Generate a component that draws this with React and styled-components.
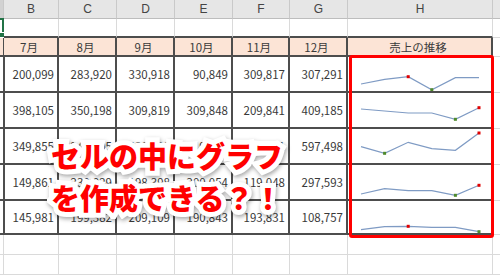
import React from 'react';
import styled, {createGlobalStyle, css} from 'styled-components';

const GlobalStyle = createGlobalStyle`
  html, body {
    margin: 0;
    padding: 0;
    background: #fff;
  }
  body {
    font-family: "Noto Sans CJK JP", "Liberation Sans", sans-serif;
  }
`;

const COLS = [4, 55, 58, 58, 58, 57, 58, 145, 67];
const ROWS = [19, 19, 19, 36, 36, 36, 36, 34, 20, 20];
const LETTERS = ['', 'B', 'C', 'D', 'E', 'F', 'G', 'H', ''];
const MONTHS = ['7月', '8月', '9月', '10月', '11月', '12月'];

const DATA = [
  {
    values: ['200,099', '283,920', '330,918', '90,849', '309,817', '307,291'],
    spark: [27, 22.3, 19.7, 32.7, 20.7, 20.7],
    high: 2,
    low: 3
  },
  {
    values: ['398,105', '350,198', '309,819', '309,848', '209,841', '409,185'],
    spark: [16, 18, 20, 20, 26.3, 14.7],
    high: 5,
    low: 4
  },
  {
    values: ['349,855', '241,095', '436,121', '319,156', '296,301', '597,498'],
    spark: [17.7, 24.3, 13.3, 19.7, 21.3, 4],
    high: 5,
    low: 1
  },
  {
    values: ['149,861', '239,029', '198,398', '200,054', '119,048', '297,593'],
    spark: [29, 23.7, 25.7, 25.7, 30.3, 20.3],
    high: 5,
    low: 4
  },
  {
    values: ['145,981', '199,382', '209,109', '190,843', '193,831', '108,757'],
    spark: [28.7, 25.7, 25.3, 26.3, 26.3, 30.7],
    high: 2,
    low: 5
  }
];

const Sheet = styled.div`
  position: relative;
  width: 500px;
  height: 275px;
  overflow: hidden;
  background: #fff;
`;

const Grid = styled.div`
  display: grid;
  grid-template-columns: ${COLS.map((w) => `${w}px`).join(' ')};
  grid-template-rows: ${ROWS.map((h) => `${h}px`).join(' ')};
`;

const Cell = styled.div`
  position: relative;
  box-sizing: border-box;
  display: flex;
  align-items: center;
  justify-content: ${(p) => (p.$align === 'right' ? 'flex-end' : 'center')};
  padding: 0 3px 0 0;
  border-right: 1px solid #dadada;
  border-bottom: 1px solid #dadada;
  font-size: 11.5px;
  color: #3a3a3a;
  white-space: nowrap;
  ${(p) => p.$bg && css`background: ${p.$bg};`}
  ${(p) => p.$darkRight && css`border-right: 2px solid #4d4d4d;`}
  ${(p) => p.$darkBottom && css`border-bottom: 2px solid #4d4d4d;`}
`;

const ChartCell = styled(Cell)`
  align-items: flex-start;
  justify-content: flex-start;
  padding: 0;
`;

const HeadCell = styled.div`
  box-sizing: border-box;
  display: flex;
  align-items: center;
  justify-content: center;
  background: ${(p) => (p.$active ? '#d2d2d2' : '#e6e6e6')};
  border-right: 1px solid #c9c9c9;
  border-bottom: 1px solid #bdbdbd;
  font-family: "Liberation Sans", sans-serif;
  font-size: 12px;
  color: #444;
`;

const Selection = styled.div`
  position: absolute;
  inset: -1px -1px -1px -1px;
  border: 2px solid #217346;
  border-left: none;
  pointer-events: none;
`;

const Handle = styled.span`
  position: absolute;
  right: -3px;
  bottom: -3px;
  width: 4px;
  height: 4px;
  background: #217346;
  border: 1px solid #fff;
`;

const Frame = styled.div`
  position: absolute;
  left: 349px;
  top: 55px;
  width: 145px;
  height: 183px;
  box-sizing: border-box;
  border: 3px solid #ff0000;
  border-radius: 3px;
  pointer-events: none;
`;

const Caption = styled.div`
  position: absolute;
  left: 51px;
  top: 134px;
  margin: 0;
  font-family: "Noto Sans CJK JP", sans-serif;
  font-weight: 900;
  font-size: 29px;
  line-height: 42px;
  white-space: pre;
  color: #ff0000;
  ${(p) =>
    p.$outline &&
    css`
      color: #fff;
      -webkit-text-stroke: 10px #fff;
      filter: drop-shadow(1px 2px 2px rgba(0, 0, 0, 0.35));
    `}
`;

const SparkSvg = styled.svg`
  display: block;
  flex: none;
`;

function Sparkline({spark, high, low, height}) {
  const xs = spark.map((_, i) => 13 + i * 23.6);
  const points = spark.map((y, i) => `${xs[i]},${y}`).join(' ');
  return (
    <SparkSvg width="143" height={height - 2}>
      <polyline points={points} fill="none" stroke="#7f9bc4" strokeWidth="1.2" />
      <rect x={xs[high] - 1.5} y={spark[high] - 1.5} width="3" height="3" fill="#e00000" />
      <rect x={xs[low] - 1.5} y={spark[low] - 1.5} width="3" height="3" fill="#4f8a2c" />
    </SparkSvg>
  );
}

export default function App() {
  const cells = [];

  // column headers
  LETTERS.forEach((l, c) => {
    cells.push(
      <HeadCell key={`h${c}`} $active={c === 0}>
        {l}
      </HeadCell>
    );
  });

  // row 1 (empty, A1 selected)
  COLS.forEach((_, c) => {
    cells.push(
      <Cell key={`r1-${c}`} $darkBottom={c <= 7}>
        {c === 0 && (
          <Selection>
            <Handle />
          </Selection>
        )}
      </Cell>
    );
  });

  // month header row
  COLS.forEach((_, c) => {
    let text = '';
    if (c >= 1 && c <= 6) text = MONTHS[c - 1];
    if (c === 7) text = '売上の推移';
    const inTable = c <= 7;
    cells.push(
      <Cell key={`r2-${c}`} $bg={inTable ? '#fce4d6' : null} $darkRight={inTable} $darkBottom={inTable}>
        {text}
      </Cell>
    );
  });

  // data rows
  DATA.forEach((row, r) => {
    const height = ROWS[3 + r];
    COLS.forEach((_, c) => {
      const inTable = c <= 7;
      if (c === 7) {
        cells.push(
          <ChartCell key={`d${r}-${c}`} $darkRight $darkBottom>
            <Sparkline spark={row.spark} high={row.high} low={row.low} height={height} />
          </ChartCell>
        );
        return;
      }
      cells.push(
        <Cell key={`d${r}-${c}`} $align="right" $darkRight={inTable} $darkBottom={inTable}>
          {c >= 1 && c <= 6 ? row.values[c - 1] : null}
        </Cell>
      );
    });
  });

  // empty rows below the table
  [0, 1].forEach((r) => {
    COLS.forEach((_, c) => {
      cells.push(<Cell key={`e${r}-${c}`} />);
    });
  });

  const text = 'セルの中にグラフ\nを作成できる？！';

  return (
    <>
      <GlobalStyle />
      <Sheet>
        <Grid>{cells}</Grid>
        <Frame />
        <Caption $outline aria-hidden="true">
          {text}
        </Caption>
        <Caption>{text}</Caption>
      </Sheet>
    </>
  );
}
